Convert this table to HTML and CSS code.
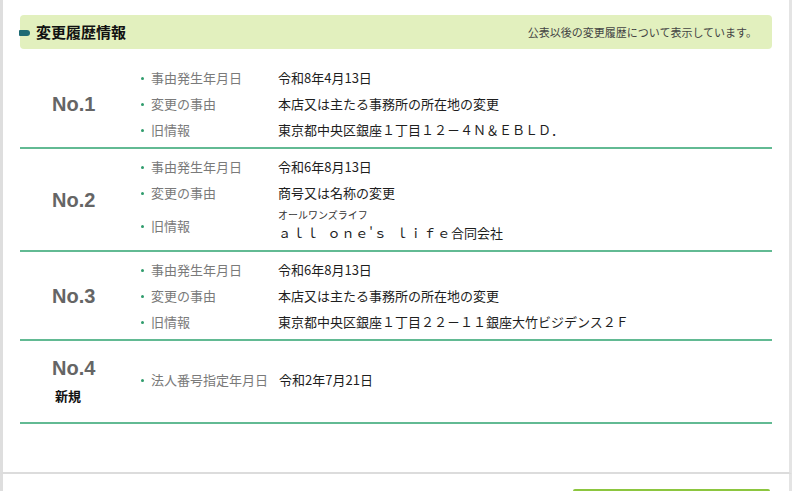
FILE: index.html
```html
<!DOCTYPE html>
<html lang="ja">
<head>
<meta charset="utf-8">
<title>変更履歴情報</title>
<link rel="stylesheet" href="styles.css">
</head>
<body>
<div class="page">
  <section class="panel">
    <div class="head">
      <h2 class="title"><span class="mark"></span>変更履歴情報</h2>
      <p class="note">公表以後の変更履歴について表示しています。</p>
    </div>

    <div class="rec">
      <div class="no">No.1</div>
      <ul class="items">
        <li class="item"><span class="lbl">事由発生年月日</span><span class="val">令和8年4月13日</span></li>
        <li class="item"><span class="lbl">変更の事由</span><span class="val">本店又は主たる事務所の所在地の変更</span></li>
        <li class="item"><span class="lbl">旧情報</span><span class="val">東京都中央区銀座１丁目１２－４Ｎ＆ＥＢＬＤ．</span></li>
      </ul>
    </div>

    <div class="rec">
      <div class="no">No.2</div>
      <ul class="items">
        <li class="item"><span class="lbl">事由発生年月日</span><span class="val">令和6年8月13日</span></li>
        <li class="item"><span class="lbl">変更の事由</span><span class="val">商号又は名称の変更</span></li>
        <li class="item item-tall"><span class="lbl">旧情報</span><span class="val"><span class="kana">オールワンズライフ</span><span class="main"><span class="wide">ａｌｌ ｏｎｅ'ｓ ｌｉｆｅ</span>合同会社</span></span></li>
      </ul>
    </div>

    <div class="rec">
      <div class="no">No.3</div>
      <ul class="items">
        <li class="item"><span class="lbl">事由発生年月日</span><span class="val">令和6年8月13日</span></li>
        <li class="item"><span class="lbl">変更の事由</span><span class="val">本店又は主たる事務所の所在地の変更</span></li>
        <li class="item"><span class="lbl">旧情報</span><span class="val">東京都中央区銀座１丁目２２－１１銀座大竹ビジデンス２Ｆ</span></li>
      </ul>
    </div>

    <div class="rec rec-new">
      <div class="no">No.4<span class="new">新規</span></div>
      <ul class="items">
        <li class="item"><span class="lbl lbl-auto">法人番号指定年月日</span><span class="val">令和2年7月21日</span></li>
      </ul>
    </div>
  </section>

  <section class="panel panel-next">
    <div class="btn-row"><span class="btn"></span></div>
  </section>
</div>
</body>
</html>
```

FILE: styles.css
```css
html, body {
  margin: 0;
  padding: 0;
  background: #ffffff;
}

body {
  font-family: "Noto Sans CJK JP", "Liberation Sans", sans-serif;
  color: #222;
  width: 800px;
  height: 492px;
  overflow: hidden;
}

.page {
  width: 792px;
}

.panel {
  border-left: 3px solid #dedede;
  border-right: 3px solid #e4e4e4;
  border-bottom: 2px solid #dcdcdc;
  padding: 15px 17px 48px 17px;
}

.head {
  display: flex;
  align-items: center;
  justify-content: space-between;
  height: 34px;
  background: #e2f0be;
  border-radius: 4px;
  padding: 0 15px 0 0;
}

.title {
  display: flex;
  align-items: center;
  margin: 0;
  font-size: 15px;
  font-weight: bold;
  color: #111;
  line-height: 34px;
  margin-left: -1px;
}

.mark {
  display: inline-block;
  width: 11px;
  height: 6px;
  background: #1e6b74;
  border-radius: 1px 3px 3px 1px;
  margin-right: 6px;
  margin-top: 1px;
}

.note {
  margin: 0;
  font-size: 11px;
  color: #444;
  line-height: 34px;
}

.rec {
  display: flex;
  align-items: center;
  border-bottom: 2px solid #62ba93;
  padding: 5px 0 4px;
}

.head + .rec {
  margin-top: 11px;
}

.no {
  box-sizing: border-box;
  width: 121px;
  padding-left: 32px;
  font-family: "Liberation Sans", "Noto Sans CJK JP", sans-serif;
  font-size: 20px;
  font-weight: bold;
  color: #656565;
  line-height: 28px;
}

.new {
  display: block;
  font-family: "Noto Sans CJK JP", sans-serif;
  font-size: 13px;
  color: #111;
  line-height: 20px;
  margin-top: 4px;
  padding-left: 3px;
}

.rec-new {
  padding: 13px 0 16px;
}

.items {
  list-style: none;
  margin: 0;
  padding: 0;
}

.item {
  display: flex;
  align-items: center;
  height: 26px;
  font-size: 13px;
}

.item::before {
  content: "";
  width: 3px;
  height: 3px;
  border-radius: 50%;
  background: #2f9c6c;
  margin-right: 7px;
  flex: none;
}

.item-tall {
  height: 40px;
}

.lbl {
  width: 127px;
  flex: none;
  color: #7a7a7a;
  line-height: 26px;
}

.lbl-auto {
  width: auto;
  margin-right: 11px;
}

.val {
  color: #1e1e1e;
  line-height: 26px;
  white-space: nowrap;
}

.item-tall .val {
  display: flex;
  flex-direction: column;
}

.kana {
  font-size: 10px;
  line-height: 14px;
  color: #333;
}

.main {
  line-height: 22px;
}

.wide {
  letter-spacing: 0.9px;
  word-spacing: 4px;
}

.panel-next {
  border-bottom: none;
  padding: 15px 19px 0 17px;
}

.btn-row {
  display: flex;
  justify-content: flex-end;
}

.btn {
  display: block;
  width: 197px;
  height: 2px;
  background: #8cc63f;
  border-radius: 2px 2px 0 0;
}
```
